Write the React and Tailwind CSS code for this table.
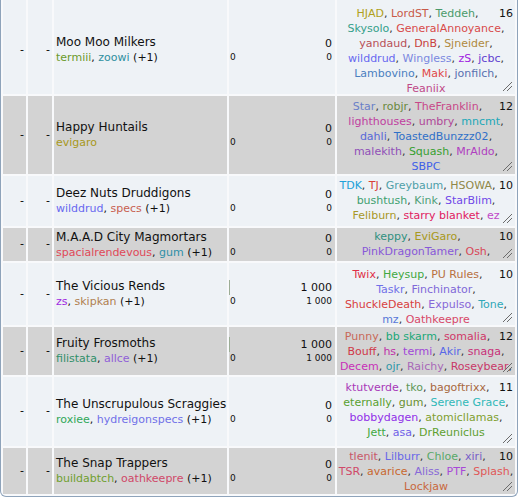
import React from 'react'

const teams = [
  {
    h: 94, pt: 6, shift: 6, name: 'Moo Moo Milkers', plus: true,
    members: [['termiii', '#6b9a2a'], ['zoowi', '#2f8fa0']],
    big: '0', small: '0', bar: false, count: '16',
    lines: [
      [['HJAD', '#b0a020'], ['LordST', '#c85a48'], ['Teddeh', '#4a9a6a']],
      [['Skysolo', '#35a08a'], ['GeneralAnnoyance', '#d84a4a']],
      [['yandaud', '#b85058'], ['DnB', '#c84040'], ['Sjneider', '#b08a40']],
      [['wilddrud', '#6868f0'], ['Wingless', '#7a88e0'], ['zS', '#a020e0'], ['jcbc', '#6040d0']],
      [['Lambovino', '#4a80c0'], ['Maki', '#e04848'], ['jonfilch', '#5870b0']],
      [['Feaniix', '#c04a88']]
    ]
  },
  {
    h: 78, pt: 3, name: 'Happy Huntails', plus: false,
    members: [['evigaro', '#a89820']],
    big: '0', small: '0', bar: false, count: '12',
    lines: [
      [['Star', '#6a80c8'], ['robjr', '#6a8a40'], ['TheFranklin', '#c84888']],
      [['lighthouses', '#c040a0'], ['umbry', '#b04898'], ['mncmt', '#20a8b8']],
      [['dahli', '#5868d8'], ['ToastedBunzzz02', '#3070c8']],
      [['malekith', '#9050b8'], ['Squash', '#38a030'], ['MrAldo', '#b040c0']],
      [['SBPC', '#4060e8']]
    ]
  },
  {
    h: 50, pt: 2, name: 'Deez Nuts Druddigons', plus: true,
    members: [['wilddrud', '#6868f0'], ['specs', '#c86050']],
    big: '0', small: '0', bar: false, count: '10',
    lines: [
      [['TDK', '#20a0d8'], ['TJ', '#d84038'], ['Greybaum', '#50a0a8'], ['HSOWA', '#908848']],
      [['bushtush', '#40a070'], ['Kink', '#50a078'], ['StarBlim', '#7048e8']],
      [['Feliburn', '#a89828'], ['starry blanket', '#e02060'], ['ez', '#c048c8']]
    ]
  },
  {
    h: 33, pt: 1, name: 'M.A.A.D City Magmortars', plus: true,
    members: [['spacialrendevous', '#e04858'], ['gum', '#3090a8']],
    big: '0', small: '0', bar: false, count: '10', more: true,
    lines: [
      [['keppy', '#309080'], ['EviGaro', '#a89820']],
      [['PinkDragonTamer', '#8858d8'], ['Osh', '#d84858']]
    ]
  },
  {
    h: 62, pt: 4, name: 'The Vicious Rends', plus: true,
    members: [['zs', '#a028e0'], ['skipkan', '#b08050']],
    big: '1 000', small: '1 000', bar: true, count: '10',
    lines: [
      [['Twix', '#e03048'], ['Heysup', '#40a840'], ['PU Rules', '#b87040']],
      [['Taskr', '#7070e8'], ['Finchinator', '#8068d8']],
      [['ShuckleDeath', '#d84040'], ['Expulso', '#8868d8'], ['Tone', '#30a8b8']],
      [['mz', '#5878d8'], ['Oathkeepre', '#d84868']]
    ]
  },
  {
    h: 48, pt: 2, name: 'Fruity Frosmoths', plus: true,
    members: [['filistata', '#30906a'], ['allce', '#9060d8']],
    big: '1 000', small: '1 000', bar: true, count: '12', more: true,
    lines: [
      [['Punny', '#c86858'], ['bb skarm', '#20a878'], ['somalia', '#d03868']],
      [['Bouff', '#d03848'], ['hs', '#c030a8'], ['termi', '#a048d8'], ['Akir', '#5868e8'], ['snaga', '#c83078']],
      [['Decem', '#c830b8'], ['ojr', '#3098a8'], ['Raichy', '#a868b8'], ['Roseybear', '#c83868']]
    ]
  },
  {
    h: 69, pt: 3, name: 'The Unscrupulous Scraggies', plus: true,
    members: [['roxiee', '#30a858'], ['hydreigonspecs', '#7070e8']],
    big: '0', small: '0', bar: false, count: '11',
    lines: [
      [['ktutverde', '#a838b8'], ['tko', '#609858'], ['bagoftrixx', '#a86840']],
      [['eternally', '#58a030'], ['gum', '#6a9030'], ['Serene Grace', '#30b8b8']],
      [['bobbydagen', '#9030e8'], ['atomicllamas', '#80a030']],
      [['Jett', '#40a840'], ['asa', '#7060e8'], ['DrReuniclus', '#60a030']]
    ]
  },
  {
    h: 46, pt: 1, name: 'The Snap Trappers', plus: true,
    members: [['buildabtch', '#70a030'], ['oathkeepre', '#d04868']],
    big: '0', small: '0', bar: false, count: '10',
    lines: [
      [['tlenit', '#c85868'], ['Lilburr', '#6868e8'], ['Chloe', '#58a868'], ['xiri', '#7860c8']],
      [['TSR', '#d04868'], ['avarice', '#c86830'], ['Aliss', '#8868d8'], ['PTF', '#a848d8'], ['Splash', '#e05858']],
      [['Lockjaw', '#c86840']]
    ]
  }
]

function Grip() {
  return (
    <svg className="absolute right-[2px] bottom-[2px]" width="11" height="11" viewBox="0 0 11 11">
      <line x1="10" y1="1" x2="1" y2="10" stroke="#6b6b6b" strokeWidth="1" />
      <line x1="10" y1="5" x2="5" y2="10" stroke="#6b6b6b" strokeWidth="1" />
    </svg>
  )
}

function Row({ t, gray }) {
  const cell = gray ? 'bg-[#d3d3d3]' : 'bg-[#eef2f6]'
  const top = { paddingTop: t.shift || 0 }
  return (
    <div className="grid grid-cols-[23px_24px_173px_106px_178px] gap-[2px]" style={{ height: t.h }}>
      <div className={`${cell} flex items-center justify-end pr-[2px] text-[11px]`} style={top}>-</div>
      <div className={`${cell} flex items-center justify-end pr-[2px] text-[11px]`} style={top}>-</div>

      <div className={`${cell} flex flex-col justify-center pl-[2px] whitespace-nowrap`} style={top}>
        <div className="text-[12px] leading-[15px] text-[#111]">{t.name}</div>
        <div className="text-[11px] leading-[15px] text-[#111]">
          {t.members.map(([m, c], i) => (
            <React.Fragment key={m}>
              {i > 0 && ', '}
              <span style={{ color: c }}>{m}</span>
            </React.Fragment>
          ))}
          {t.plus && ' (+1)'}
        </div>
      </div>

      <div className={`${cell} flex flex-col justify-center text-[#111]`} style={top}>
        <div className="flex items-center justify-between h-[15px]">
          {t.bar ? <span className="w-px h-[15px] bg-[#9cad96]" /> : <span />}
          <span className="text-[11px] leading-[15px] pr-[3px]">{t.big}</span>
        </div>
        <div className="flex justify-between text-[9px] leading-[13px] pl-[1px]">
          <span>0</span>
          <span className="pr-[3px]">{t.small}</span>
        </div>
      </div>

      <div className={`${cell} relative overflow-hidden text-center text-[11px] leading-[15px] px-[1px] text-[#333]`} style={{ paddingTop: t.pt }}>
        <span className="float-right pl-[2px] pr-[1px] text-[#111]">{t.count}</span>
        {t.lines.map((line, li) => (
          <div key={li} className="whitespace-nowrap">
            {line.map(([n, c], ni) => {
              const last = li === t.lines.length - 1 && ni === line.length - 1 && !t.more
              return (
                <React.Fragment key={n}>
                  <span style={{ color: c }}>{n}</span>
                  {!last && (ni === line.length - 1 ? ',' : ', ')}
                </React.Fragment>
              )
            })}
          </div>
        ))}
        <Grip />
      </div>
    </div>
  )
}

export default function App() {
  return (
    <div className="w-[518px] bg-white font-['DejaVu_Sans',Verdana,sans-serif]">
      <div className="flex flex-col gap-[2px] bg-[#f8f9fb] px-[2px] pb-[2px] border-l border-r border-b border-[#8ea3ba] rounded-b-[6px]">
        {teams.map((t, i) => (
          <Row key={t.name} t={t} gray={i % 2 === 1} />
        ))}
      </div>
    </div>
  )
}
